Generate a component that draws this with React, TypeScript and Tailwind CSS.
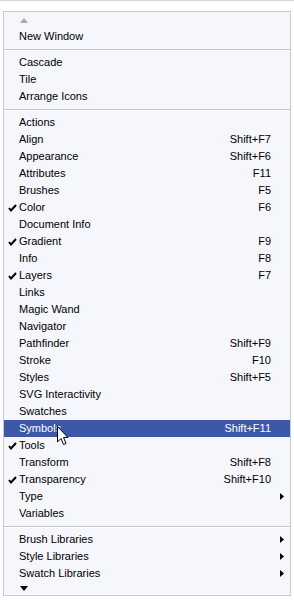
import React from 'react';

type Item = { label: string; shortcut?: string; checked?: boolean; sub?: boolean; active?: boolean };

const panels: Item[] = [
  { label: 'Actions' },
  { label: 'Align', shortcut: 'Shift+F7' },
  { label: 'Appearance', shortcut: 'Shift+F6' },
  { label: 'Attributes', shortcut: 'F11' },
  { label: 'Brushes', shortcut: 'F5' },
  { label: 'Color', shortcut: 'F6', checked: true },
  { label: 'Document Info' },
  { label: 'Gradient', shortcut: 'F9', checked: true },
  { label: 'Info', shortcut: 'F8' },
  { label: 'Layers', shortcut: 'F7', checked: true },
  { label: 'Links' },
  { label: 'Magic Wand' },
  { label: 'Navigator' },
  { label: 'Pathfinder', shortcut: 'Shift+F9' },
  { label: 'Stroke', shortcut: 'F10' },
  { label: 'Styles', shortcut: 'Shift+F5' },
  { label: 'SVG Interactivity' },
  { label: 'Swatches' },
  { label: 'Symbols', shortcut: 'Shift+F11', active: true },
  { label: 'Tools', checked: true },
  { label: 'Transform', shortcut: 'Shift+F8' },
  { label: 'Transparency', shortcut: 'Shift+F10', checked: true },
  { label: 'Type', sub: true },
  { label: 'Variables' },
];

const libraries: Item[] = [
  { label: 'Brush Libraries', sub: true },
  { label: 'Style Libraries', sub: true },
  { label: 'Swatch Libraries', sub: true },
];

const Check = () => (
  <svg width="9" height="8" viewBox="0 0 9 8" className="absolute left-[4px] top-[5px]">
    <path d="M1 4 L3 6.5 L8 1" stroke="#000" strokeWidth="2" fill="none" />
  </svg>
);

const Cursor = () => (
  <svg width="12" height="20" viewBox="0 0 12 20" className="absolute left-[53px] top-[6px]">
    <path d="M0.5 0.5 L0.5 16 L4 12.5 L6.5 18.5 L9 17.5 L6.5 11.5 L11 11.5 Z" fill="#fff" stroke="#000" strokeWidth="1" />
  </svg>
);

const Row = ({ item }: { item: Item }) => (
  <div
    className={`relative flex items-center h-[17px] pl-[15px] pr-[19px] ${
      item.active ? 'bg-[#3d58a6] text-white' : 'text-black'
    }`}
  >
    {item.checked && <Check />}
    <span className="flex-1">{item.label}</span>
    {item.shortcut && <span>{item.shortcut}</span>}
    {item.sub && (
      <svg width="4" height="7" viewBox="0 0 4 7" className="absolute right-[6px] top-[5px]">
        <path d="M0 0 L4 3.5 L0 7 Z" fill="#000" />
      </svg>
    )}
    {item.active && <Cursor />}
  </div>
);

const Separator = () => (
  <div className="h-[9px] flex flex-col justify-center">
    <div className="h-px bg-[#c4c4cc]" />
    <div className="h-px bg-white" />
  </div>
);

export default function App() {
  return (
    <div className="w-[294px] h-[600px] bg-white border-t border-[#d8d8d8] overflow-hidden">
      <div
        className="ml-[3px] mt-[10px] w-[288px] bg-[#f6f6fd] border border-[#c8c8d0] text-[11px] leading-none"
        style={{ fontFamily: '"Liberation Sans", Arial, sans-serif' }}
      >
        <div className="h-[16px] pl-[16px] flex items-center">
          <svg width="8" height="5" viewBox="0 0 8 5">
            <path d="M0 5 L4 0 L8 5 Z" fill="#a8a8b0" />
          </svg>
        </div>
        <Row item={{ label: 'New Window' }} />
        <Separator />
        <Row item={{ label: 'Cascade' }} />
        <Row item={{ label: 'Tile' }} />
        <Row item={{ label: 'Arrange Icons' }} />
        <Separator />
        {panels.map((p) => (
          <Row key={p.label} item={p} />
        ))}
        <Separator />
        {libraries.map((p) => (
          <Row key={p.label} item={p} />
        ))}
        <div className="h-[13px] pl-[16px] flex items-center">
          <svg width="8" height="5" viewBox="0 0 8 5">
            <path d="M0 0 L8 0 L4 5 Z" fill="#000" />
          </svg>
        </div>
      </div>
    </div>
  );
}
